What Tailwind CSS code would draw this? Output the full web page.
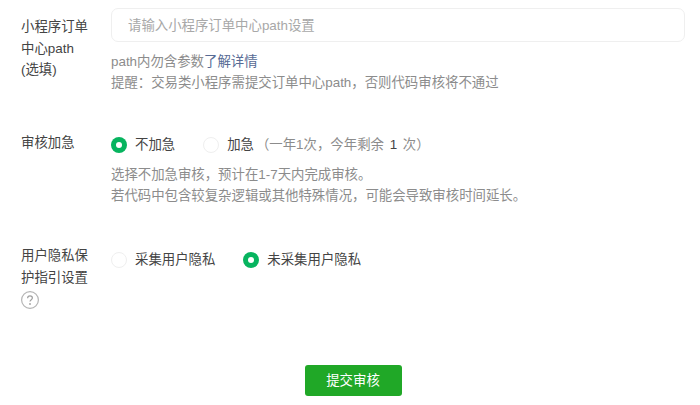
<!DOCTYPE html>
<html lang="zh-CN">
<head>
<meta charset="utf-8">
<script src="https://cdn.jsdelivr.net/npm/@tailwindcss/browser@4"></script>
</head>
<body class="bg-white overflow-hidden font-['Liberation_Sans','Noto_Sans_CJK_SC',sans-serif] text-[13.4px] leading-[21.5px] text-[#444444]">
<div class="w-[700px] h-[405px] pl-[21px] pr-[15px] pt-[8px] flex flex-col">
  <div class="flex h-[119px]">
    <div class="w-[90px] shrink-0 pt-[8px] pr-[20px]">小程序订单中心path (选填)</div>
    <div class="flex-1">
      <div class="h-[34px] rounded-[7px] border border-[#efefef] pl-[16px] pt-[2px] flex items-center text-[#a8a8a8]">请输入小程序订单中心path设置</div>
      <div class="mt-[9px] leading-[21px] text-[#8c8c8c]">path内勿含参数<span class="text-[#576b95]">了解详情</span></div>
      <div class="leading-[21px] text-[#8c8c8c]">提醒：交易类小程序需提交订单中心path，否则代码审核将不通过</div>
    </div>
  </div>
  <div class="flex h-[118px]">
    <div class="w-[90px] shrink-0 pt-[5px]">审核加急</div>
    <div class="flex-1">
      <div class="flex items-center h-[32px] mt-[2px]">
        <span class="w-[16px] h-[16px] rounded-full bg-[#07b45f] flex items-center justify-center"><span class="w-[6px] h-[6px] rounded-full bg-white"></span></span>
        <span class="ml-[8px]">不加急</span>
        <span class="ml-[28px] w-[16px] h-[16px] rounded-full border border-[#efefef]"></span>
        <span class="ml-[8px]">加急</span>
        <span class="ml-[2px] text-[#8c8c8c]">（一年1次，今年剩余 <span class="mx-[2px] text-[#444444]">1</span> 次）</span>
      </div>
      <div class="mt-[3px] leading-[21px] text-[#8c8c8c]">选择不加急审核，预计在1-7天内完成审核。</div>
      <div class="leading-[21px] text-[#8c8c8c]">若代码中包含较复杂逻辑或其他特殊情况，可能会导致审核时间延长。</div>
    </div>
  </div>
  <div class="flex h-[120px]">
    <div class="w-[90px] shrink-0 pr-[20px]">
      <div>用户隐私保护指引设置</div>
      <svg class="mt-[3px]" width="18" height="18" viewBox="0 0 18 18" fill="none"><circle cx="9" cy="9" r="8.4" stroke="#b5b5b5" stroke-width="1.2"/><path d="M6.6 7.2c0-1.4 1.1-2.3 2.4-2.3s2.4.9 2.4 2.1c0 1.6-2.4 1.8-2.4 3.6" stroke="#a0a0a0" stroke-width="1.2"/><circle cx="9" cy="13" r=".9" fill="#a0a0a0"/></svg>
    </div>
    <div class="flex-1">
      <div class="flex items-center h-[32px] -mt-[1px]">
        <span class="w-[16px] h-[16px] rounded-full border border-[#efefef]"></span>
        <span class="ml-[8px]">采集用户隐私</span>
        <span class="ml-[28px] w-[16px] h-[16px] rounded-full bg-[#07b45f] flex items-center justify-center"><span class="w-[6px] h-[6px] rounded-full bg-white"></span></span>
        <span class="ml-[8px]">未采集用户隐私</span>
      </div>
    </div>
  </div>
  <div class="flex justify-center">
    <button class="w-[97px] h-[31px] rounded-[3px] bg-[#20a827] text-white">提交审核</button>
  </div>
</div>
</body>
</html>
